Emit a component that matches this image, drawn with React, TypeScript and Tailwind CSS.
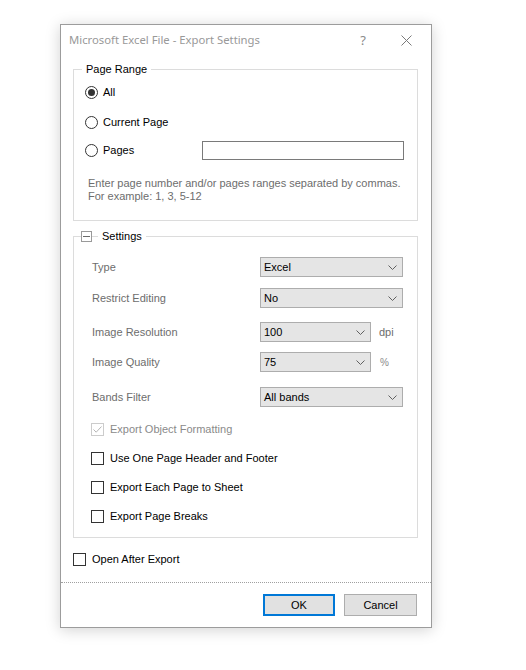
import React from "react";

const font = { fontFamily: '"Liberation Sans", Arial, sans-serif' };

function Chevron() {
  return (
    <svg width="9" height="5" viewBox="0 0 9 5" className="shrink-0">
      <path d="M0.5 0.5 L4.5 4.5 L8.5 0.5" fill="none" stroke="#606060" strokeWidth="1" />
    </svg>
  );
}

function Select({ value, width }: { value: string; width: string }) {
  return (
    <div
      className={`${width} h-[20px] bg-[#e5e5e5] border border-[#adadad] flex items-center justify-between pl-[3px] pr-[5px] text-[11px] text-black`}
    >
      <span>{value}</span>
      <Chevron />
    </div>
  );
}

function Radio({ checked, label }: { checked?: boolean; label: string }) {
  return (
    <div className="flex items-center h-[20px]">
      <div className="w-[13px] h-[13px] rounded-full border border-[#333] bg-white flex items-center justify-center">
        {checked && <div className="w-[7px] h-[7px] rounded-full bg-[#333]" />}
      </div>
      <span className="ml-[5px] text-[11px] text-black">{label}</span>
    </div>
  );
}

function Check({ label, disabled, checked }: { label: string; disabled?: boolean; checked?: boolean }) {
  return (
    <div className="flex items-center h-[16px]">
      <div
        className={`w-[13px] h-[13px] border flex items-center justify-center bg-white ${
          disabled ? "border-[#cccccc]" : "border-[#333]"
        }`}
      >
        {checked && (
          <svg width="11" height="11" viewBox="0 0 11 11">
            <path d="M1.5 5.5 L4.2 8.2 L9.5 2.5" fill="none" stroke={disabled ? "#b5b5b5" : "#333"} strokeWidth="1" />
          </svg>
        )}
      </div>
      <span className={`ml-[6px] text-[11px] ${disabled ? "text-[#8a8a8a]" : "text-black"}`}>{label}</span>
    </div>
  );
}

function Row({ label, children, className }: { label: string; children: React.ReactNode; className?: string }) {
  return (
    <div className={`flex items-center h-[20px] ${className ?? ""}`}>
      <span className="w-[168px] text-[11px] text-[#6d6d6d]">{label}</span>
      {children}
    </div>
  );
}

export default function App() {
  return (
    <div className="w-[526px] h-[670px] bg-white pt-[24px] pl-[60px]" style={font}>
      <div className="w-[372px] h-[604px] border border-[#9c9c9c] bg-white shadow-[0_2px_14px_rgba(0,0,0,0.18)] flex flex-col">
        {/* Title bar */}
        <div className="h-[31px] flex items-center pl-[8px] shrink-0">
          <span className="text-[11.3px] text-[#999] flex-1" style={{ fontFamily: '"Noto Sans", "Open Sans", sans-serif' }}>
            Microsoft Excel File - Export Settings
          </span>
          <span className="text-[13px] text-[#8a8a8a] mr-[35px]" style={{ fontFamily: '"Noto Sans", sans-serif' }}>?</span>
          <svg width="11" height="11" viewBox="0 0 11 11" className="mr-[19px]">
            <path d="M0.5 0.5 L10.5 10.5 M10.5 0.5 L0.5 10.5" stroke="#7a7a7a" strokeWidth="1" />
          </svg>
        </div>

        {/* Page Range */}
        <fieldset className="mt-[6px] ml-[12px] w-[345px] border border-[#dcdcdc] shrink-0">
          <legend className="ml-[8px] px-[4px] text-[11px] leading-[14px] text-black">Page Range</legend>
          <div className="pl-[11px] pr-[13px] pb-[17px]">
            <div className="mt-[6px]">
              <Radio checked label="All" />
            </div>
            <div className="mt-[10px]">
              <Radio label="Current Page" />
            </div>
            <div className="mt-[8px] flex items-center justify-between">
              <Radio label="Pages" />
              <div className="w-[202px] h-[19px] border border-[#7a7a7a] bg-white" />
            </div>
            <div className="mt-[17px] pl-[3px] text-[11px] leading-[13px] text-[#6d6d6d]">
              <div>Enter page number and/or pages ranges separated by commas.</div>
              <div>For example: 1, 3, 5-12</div>
            </div>
          </div>
        </fieldset>

        {/* Settings */}
        <fieldset className="mt-[8px] ml-[12px] w-[345px] border border-[#dcdcdc] shrink-0">
          <legend className="ml-[7px] flex items-center leading-[14px]">
            <div className="w-[11px] h-[11px] border border-[#9a9a9a] bg-white flex items-center justify-center">
              <div className="w-[7px] h-px bg-[#6a6a6a]" />
            </div>
            <div className="w-[6px] h-px bg-[#dcdcdc]" />
            <span className="pl-[4px] pr-[4px] text-[11px] text-black">Settings</span>
          </legend>
          <div className="pl-[18px] pb-[13px]">
            <Row label="Type" className="mt-[14px]">
              <Select value="Excel" width="w-[143px]" />
            </Row>
            <Row label="Restrict Editing" className="mt-[11px]">
              <Select value="No" width="w-[143px]" />
            </Row>
            <Row label="Image Resolution" className="mt-[14px]">
              <Select value="100" width="w-[111px]" />
              <span className="ml-[8px] text-[11px] text-[#6d6d6d]">dpi</span>
            </Row>
            <Row label="Image Quality" className="mt-[10px]">
              <Select value="75" width="w-[111px]" />
              <span className="ml-[9px] text-[10px] text-[#8a8a8a]">%</span>
            </Row>
            <Row label="Bands Filter" className="mt-[15px]">
              <Select value="All bands" width="w-[143px]" />
            </Row>
            <div className="mt-[14px] -ml-px">
              <Check label="Export Object Formatting" disabled checked />
            </div>
            <div className="mt-[13px] -ml-px">
              <Check label="Use One Page Header and Footer" />
            </div>
            <div className="mt-[13px] -ml-px">
              <Check label="Export Each Page to Sheet" />
            </div>
            <div className="mt-[13px] -ml-px">
              <Check label="Export Page Breaks" />
            </div>
          </div>
        </fieldset>

        {/* Open After Export */}
        <div className="mt-[13px] ml-[12px]">
          <Check label="Open After Export" />
        </div>

        <div className="mt-[15px] border-t border-dotted border-[#a0a0a0]" />

        {/* Buttons */}
        <div className="mt-[11px] flex justify-end gap-[9px] pr-[14px]">
          <button className="w-[72px] h-[22px] bg-[#e1e1e1] border-2 border-[#0078d7] text-[11px] text-black">OK</button>
          <button className="w-[73px] h-[22px] bg-[#e1e1e1] border border-[#adadad] text-[11px] text-black">Cancel</button>
        </div>
      </div>
    </div>
  );
}
